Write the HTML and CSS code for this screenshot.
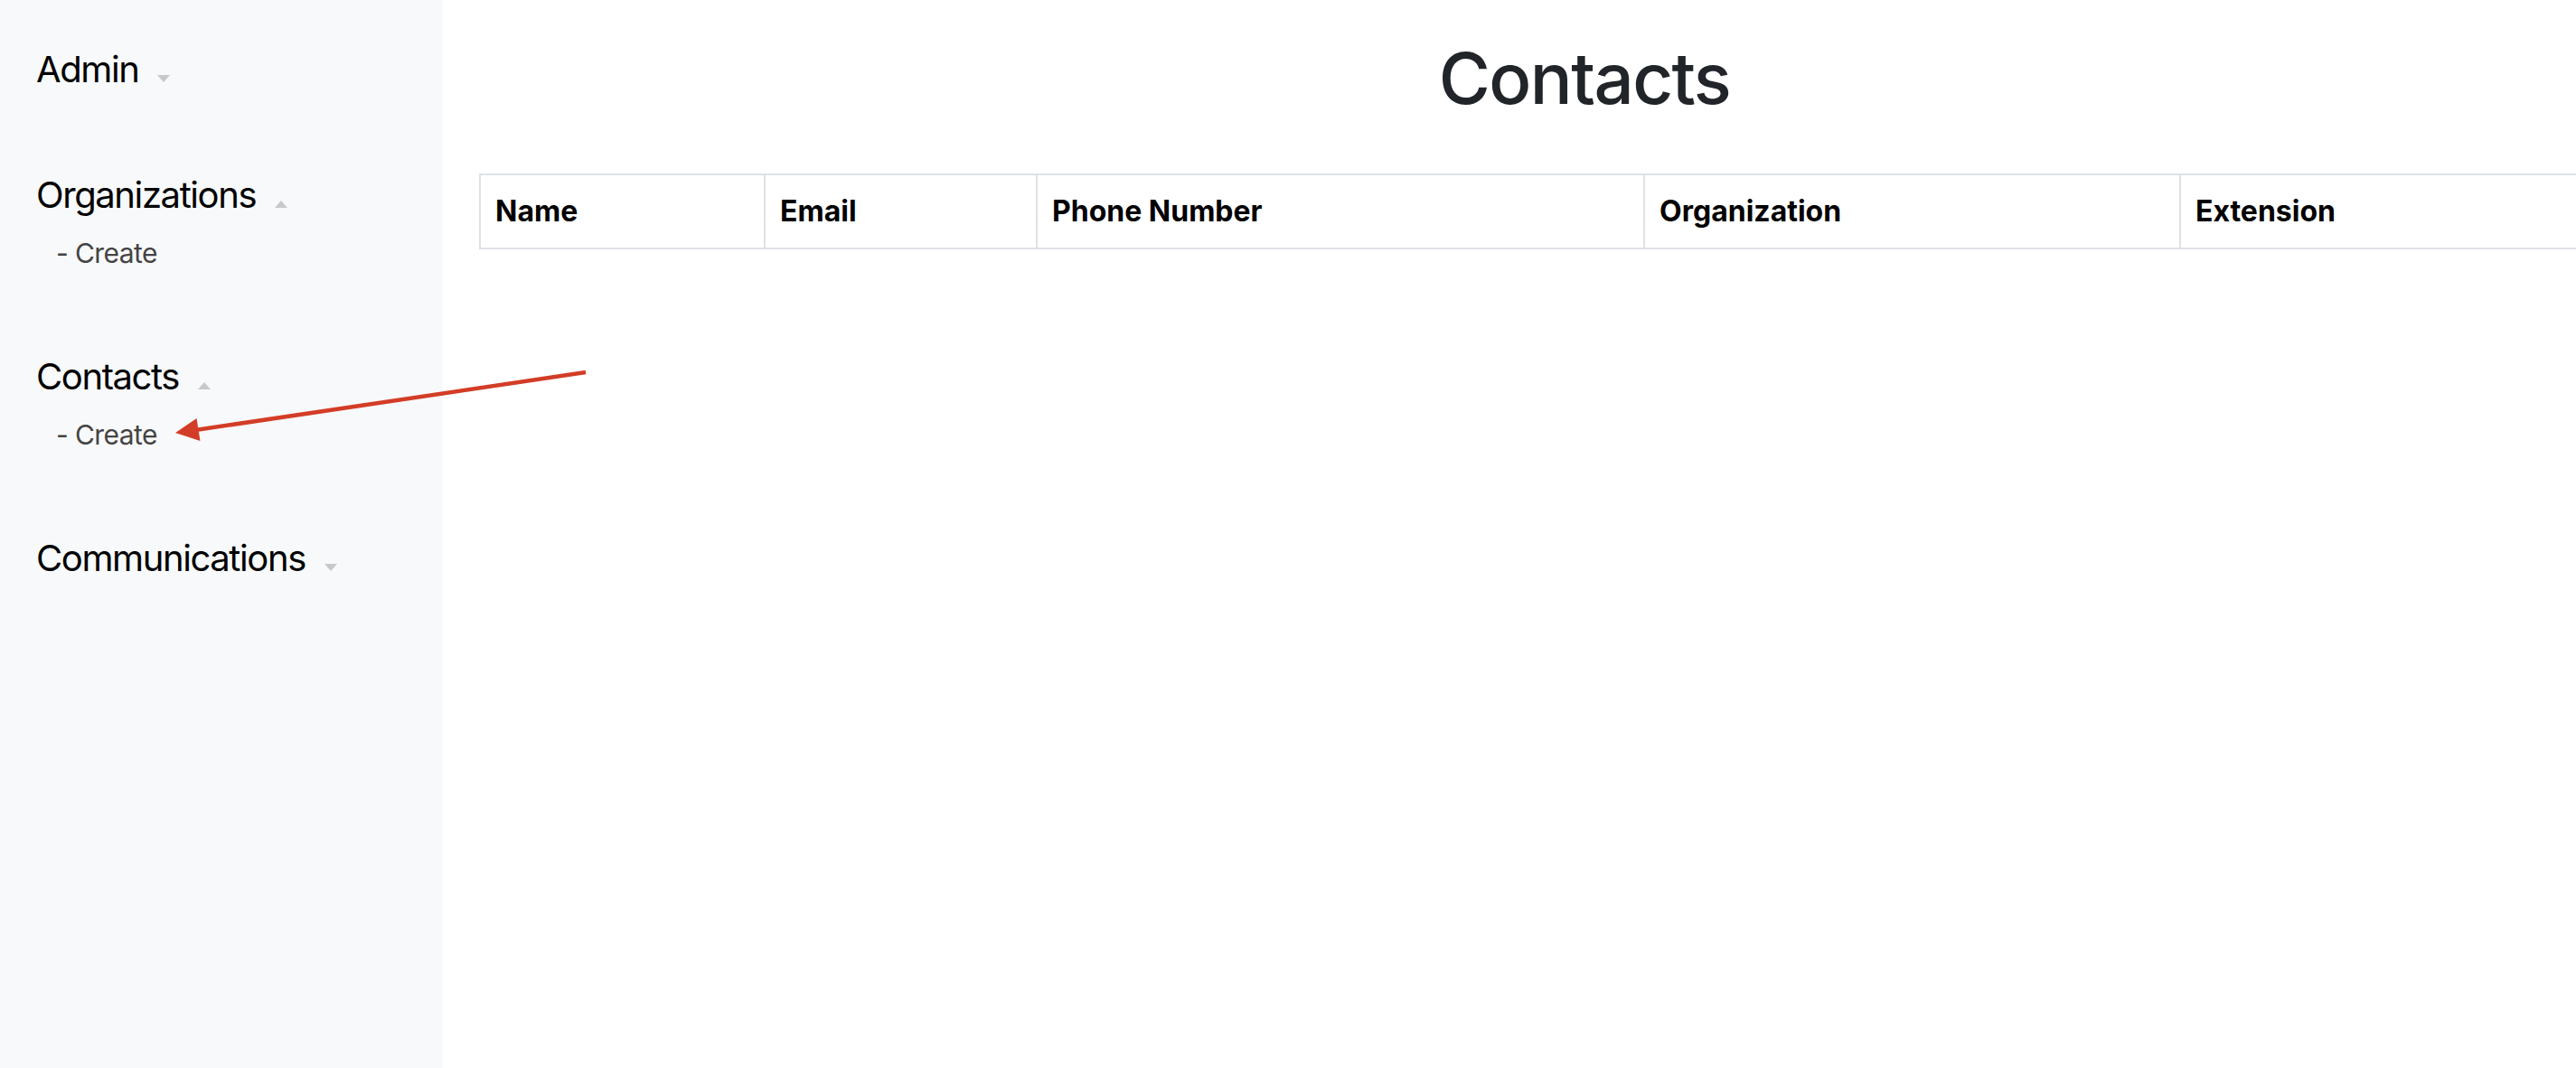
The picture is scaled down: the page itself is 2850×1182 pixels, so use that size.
FILE: index.html
```html
<!DOCTYPE html>
<html lang="en">
<head>
<meta charset="utf-8">
<title>Contacts</title>
<link rel="stylesheet" href="styles.css">
</head>
<body>
<div class="app">
  <nav class="sidebar">
    <div class="section">
      <div class="heading">Admin<span class="caret caret-down"></span></div>
    </div>
    <div class="section">
      <div class="heading">Organizations<span class="caret caret-up"></span></div>
      <ul class="items"><li>- Create</li></ul>
    </div>
    <div class="section">
      <div class="heading">Contacts<span class="caret caret-up"></span></div>
      <ul class="items"><li>- Create</li></ul>
    </div>
    <div class="section">
      <div class="heading">Communications<span class="caret caret-down"></span></div>
    </div>
  </nav>
  <main class="main">
    <h1 class="title">Contacts</h1>
    <table class="grid">
      <colgroup>
        <col class="c-name"><col class="c-email"><col class="c-phone"><col class="c-org"><col class="c-ext">
      </colgroup>
      <thead>
        <tr><th>Name</th><th>Email</th><th>Phone Number</th><th>Organization</th><th>Extension</th></tr>
      </thead>
    </table>
  </main>
</div>
<svg class="annotation" width="2850" height="1182" viewBox="0 0 2850 1182">
  <line x1="648" y1="412" x2="216" y2="476" stroke="#d33d27" stroke-width="4.5" stroke-linecap="butt"/>
  <polygon points="194,479 217.5,463 221.5,488" fill="#d33d27"/>
</svg>
</body>
</html>
```
FILE: styles.css
```css
html, body {
  margin: 0;
  padding: 0;
  background: #ffffff;
  overflow: hidden;
  font-family: Inter, "Noto Sans", "Liberation Sans", sans-serif;
}

.app {
  display: flex;
  min-height: 1182px;
  width: 3100px;
}

.sidebar {
  width: 490px;
  flex: 0 0 490px;
  background: #f8f9fa;
  padding: 47px 0 0 40px;
  box-sizing: border-box;
}

.section {
  padding-bottom: 79px;
}

.heading {
  font-size: 40px;
  line-height: 60px;
  letter-spacing: -1.4px;
  color: #000000;
}

.caret {
  display: inline-block;
  width: 0;
  height: 0;
  margin-left: 21px;
  vertical-align: 0;
  border-left: 7.5px solid transparent;
  border-right: 7.5px solid transparent;
}

.caret-down {
  border-top: 8px solid #c8c8c8;
}

.caret-up {
  border-bottom: 8px solid #c8c8c8;
}

.items {
  list-style: none;
  margin: 10px 0 4px 0;
  padding: 0 0 0 22px;
}

.items li {
  font-size: 30px;
  line-height: 48px;
  letter-spacing: -0.6px;
  color: #444444;
}

.main {
  flex: 0 0 auto;
  padding: 39px 0 0 40px;
  width: 2446px;
}

.title {
  margin: 0 0 57px 0;
  font-size: 78px;
  line-height: 96px;
  font-weight: 500;
  letter-spacing: -1.6px;
  color: #212529;
  text-align: center;
}

.grid {
  border-collapse: collapse;
  table-layout: fixed;
  width: 2446px;
}

.grid th {
  border: 2px solid #dee2e6;
  padding: 16px;
  font-size: 32px;
  line-height: 48px;
  font-weight: 700;
  color: #000000;
  text-align: left;
}

.c-name { width: 315px; }
.c-email { width: 301px; }
.c-phone { width: 672px; }
.c-org { width: 593px; }
.c-ext { width: 565px; }

.annotation {
  position: absolute;
  left: 0;
  top: 0;
  pointer-events: none;
}
```
